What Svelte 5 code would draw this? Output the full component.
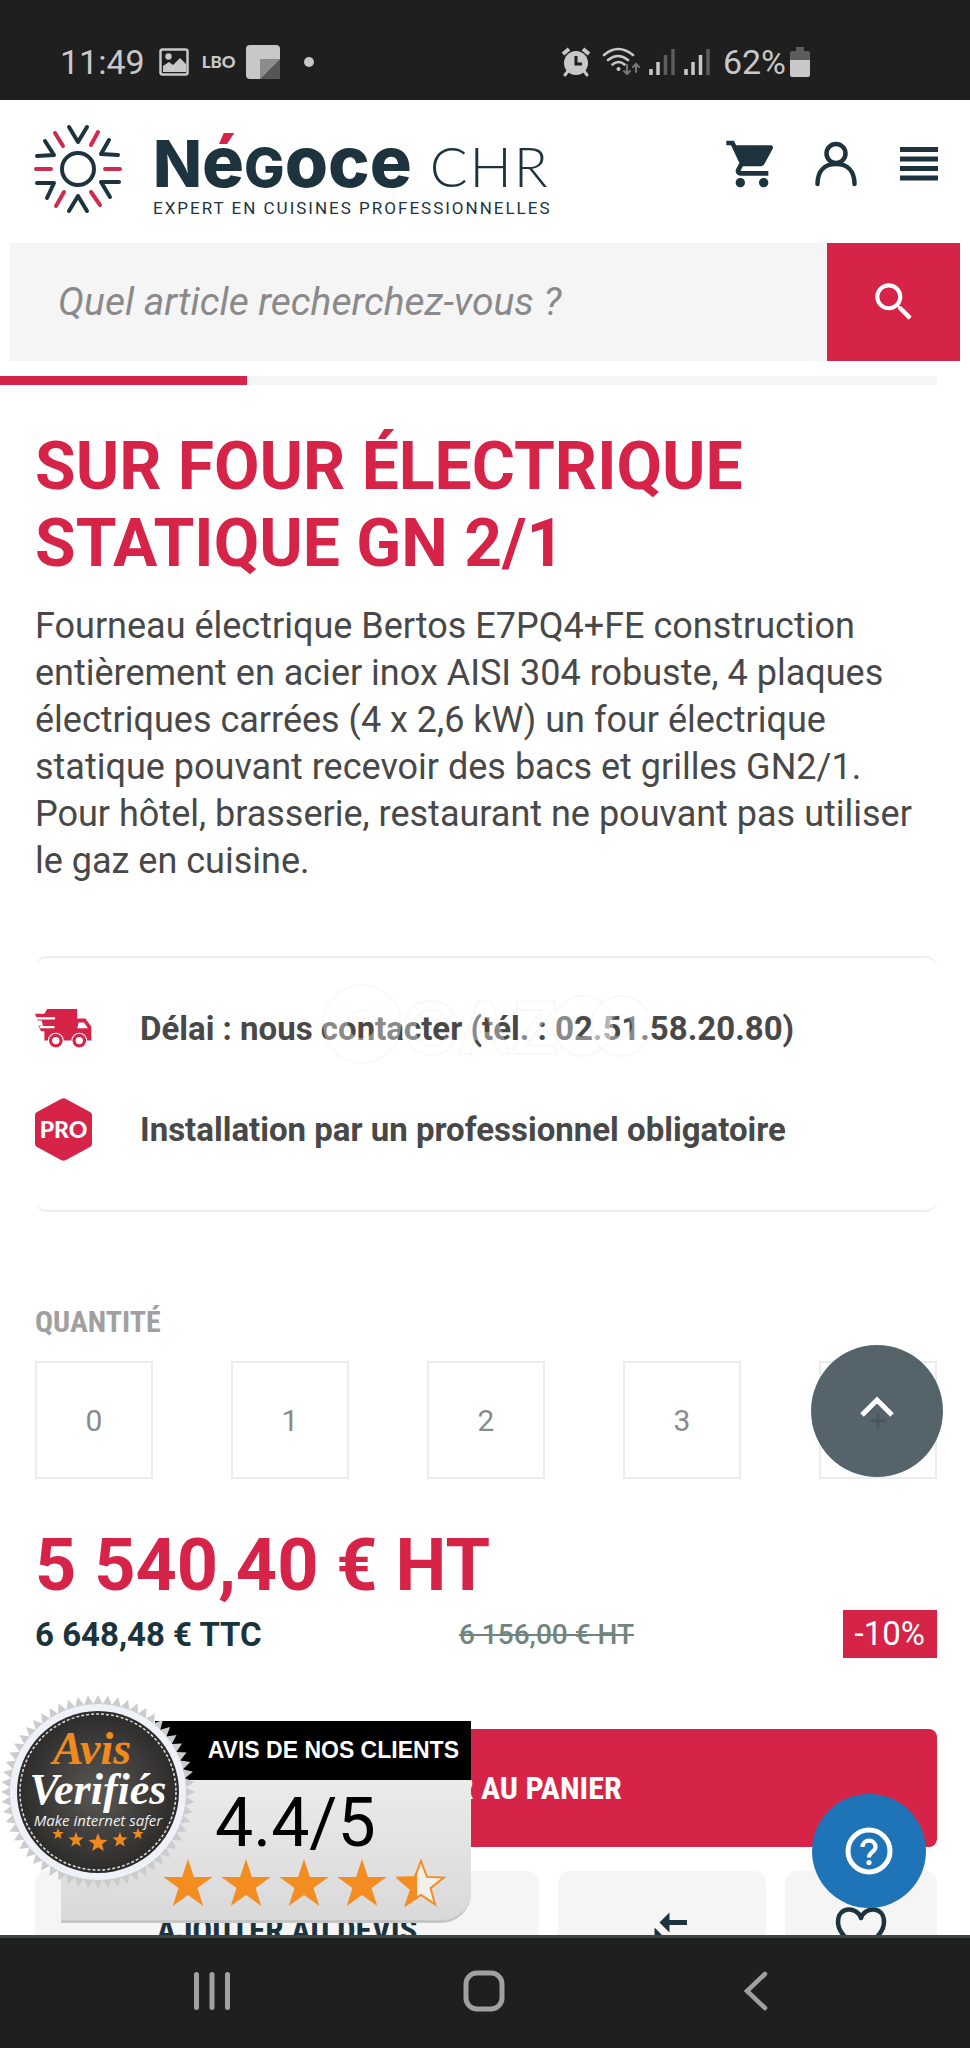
<script>
  let search = $state('');

  const quantities = ['0', '1', '2', '3', '+'];
  const gridStars = [0, 1, 2, 3];

  // Points of a regular star or toothed disc around a centre.
  function burst(cx, cy, outer, inner, tips) {
    const points = [];
    for (let i = 0; i < tips * 2; i++) {
      const r = i % 2 ? inner : outer;
      const a = (Math.PI * i) / tips - Math.PI / 2;
      points.push(`${(cx + r * Math.cos(a)).toFixed(1)},${(cy + r * Math.sin(a)).toFixed(1)}`);
    }
    return points.join(' ');
  }

  const sealStars = [
    [58, 140, 6],
    [76, 146, 8],
    [98, 149, 10],
    [120, 146, 8],
    [138, 140, 6]
  ];
</script>

<div class="screen">
  <div class="status">
    <span class="clock">11:49</span>
    <svg class="s-image" width="30" height="28" viewBox="0 0 30 28">
      <rect x="1.5" y="1.5" width="27" height="25" rx="2" fill="none" stroke="#c8c8c8" stroke-width="2.5" />
      <circle cx="9.5" cy="8.5" r="3.2" fill="#c8c8c8" />
      <path d="M4 22V18l6-4 4 3 7-7 6 6v8H4z" fill="#c8c8c8" />
    </svg>
    <span class="lbo">LBO</span>
    <svg class="s-square" width="34" height="34" viewBox="0 0 34 34">
      <rect width="34" height="34" rx="4" fill="#c8c8c8" />
      <path d="M14 14h20L14 34z" fill="#8c8c8c" />
      <path d="M34 14v20H14z" fill="#555" />
    </svg>
    <span class="dot"></span>
    <div class="status-right">
      <svg width="30" height="30" viewBox="0 0 30 30">
        <circle cx="15" cy="16" r="12" fill="#c8c8c8" />
        <path d="M2 7l6-5M28 7l-6-5" stroke="#c8c8c8" stroke-width="4" />
        <path d="M7 24l-3 4M23 24l3 4" stroke="#c8c8c8" stroke-width="3" stroke-linecap="round" />
        <path d="M15 9v8h6" fill="none" stroke="#1f1f1f" stroke-width="3" />
      </svg>
      <svg class="s-wifi" width="38" height="30" viewBox="0 0 38 30" fill="none" stroke="#c8c8c8" stroke-width="2.6" stroke-linecap="round">
        <path d="M2 8q14-12 29 0M6 13q10-8 20 0M10.500 17.500q6-5 12 0" />
        <circle cx="16.500" cy="22" r="2" fill="#c8c8c8" stroke="none" />
        <path d="M25 18v9M22 24l3 3 3-3M34 25v-8M31 20l3-3 3 3" stroke="#777" stroke-width="2" />
      </svg>
      <svg class="s-signal" width="26" height="28" viewBox="0 0 26 28">
        <path d="M2 21v6M9 14v13" stroke="#c8c8c8" stroke-width="3.500" />
        <path d="M16.500 7v20M24 1v26" stroke="#5c5c5c" stroke-width="3.500" />
      </svg>
      <svg class="s-signal" width="26" height="28" viewBox="0 0 26 28">
        <path d="M2 21v6M9 14v13M16.500 7v20" stroke="#c8c8c8" stroke-width="3.500" />
        <path d="M24 1v26" stroke="#5c5c5c" stroke-width="3.500" />
      </svg>
      <span class="percent">62%</span>
      <svg width="20" height="30" viewBox="0 0 20 30">
        <path d="M6 0h8v4h4q2 0 2 2v8H0V6q0-2 2-2h4z" fill="#5c5c5c" />
        <path d="M0 13h20v15q0 2-2 2H2q-2 0-2-2z" fill="#c8c8c8" />
      </svg>
    </div>
  </div>

  <main>
    <header>
      <a class="brand" href="#accueil" aria-label="Négoce CHR">
        <svg width="90" height="90" viewBox="33 124 90 90" fill="none" stroke-width="4" stroke-linecap="round" stroke-linejoin="round">
          <g stroke="#1d333d">
            <circle cx="78" cy="169" r="16" />
            <path d="M69 127l9 15 9-15M69 211l9-15 9 15M45 141l9 14-17 1M109 140l-8 14 17 1M37 183l17 0-7 15M119 182l-18 0 9 15" />
          </g>
          <path d="M55 133l8 13M98 132l-7 13M36 169h15M105 169h15M64 192l-8 14M91 192l9 13" stroke="#d02b4e" />
        </svg>
        <span class="words">
          <span class="name"><b><span class="cap">N</span><span class="accent">é</span><span class="small">G</span>oce</b><span class="chr">CHR</span></span>
          <span class="tagline">EXPERT EN CUISINES PROFESSIONNELLES</span>
        </span>
      </a>
      <nav class="tools">
        <button aria-label="Panier">
          <svg width="56" height="56" viewBox="0 0 24 24" fill="#1d333d">
            <path d="M7 18c-1.100 0-1.990.9-1.990 2S5.900 22 7 22s2-.9 2-2-.9-2-2-2zM1 2v2h2l3.600 7.590-1.350 2.450c-.16.28-.25.61-.25.96 0 1.100.9 2 2 2h12v-2H7.420c-.14 0-.25-.11-.25-.25l.03-.12.9-1.630h7.450c.75 0 1.410-.41 1.750-1.030l3.580-6.490A1 1 0 0 0 20 4H5.210l-.94-2H1zm16 16c-1.100 0-1.990.9-1.990 2s.89 2 1.990 2 2-.9 2-2-.9-2-2-2z" />
          </svg>
        </button>
        <button aria-label="Compte">
          <svg width="44" height="46" viewBox="0 0 44 46" fill="none" stroke="#1d333d" stroke-width="4.500" stroke-linecap="round">
            <circle cx="22" cy="12.500" r="9.500" />
            <path d="M3.500 43c0-14 8-20 18.500-20s18.500 6 18.500 20" />
          </svg>
        </button>
        <button aria-label="Menu">
          <svg width="38" height="34" viewBox="0 0 38 34" fill="#1d333d">
            <path d="M0 0h38v5H0zM0 9.500h38v5H0zM0 19h38v5H0zM0 28.500h38v5H0z" />
          </svg>
        </button>
      </nav>
    </header>

    <form class="search" onsubmit={(e) => e.preventDefault()}>
      <input type="text" aria-label="Rechercher" placeholder="Quel article recherchez-vous ?" bind:value={search} />
      <button aria-label="Lancer la recherche">
        <svg width="50" height="50" viewBox="0 0 24 24" fill="#fff">
          <path d="M15.500 14h-.79l-.28-.27A6.470 6.470 0 0 0 16 9.500 6.500 6.500 0 1 0 9.500 16c1.610 0 3.090-.59 4.230-1.570l.27.28v.79l5 4.990L20.490 19l-4.990-5zm-6 0C7.010 14 5 11.990 5 9.500S7.010 5 9.500 5 14 7.010 14 9.500 11.990 14 9.500 14z" />
        </svg>
      </button>
    </form>

    <div class="progress"><div style="width: 26.400%"></div></div>

    <article>
      <h1>SUR FOUR ÉLECTRIQUE STATIQUE GN 2/1</h1>
      <p class="description">
        Fourneau électrique Bertos E7PQ4+FE construction entièrement en acier inox AISI 304 robuste, 4 plaques
        électriques carrées (4 x 2,6 kW) un four électrique statique pouvant recevoir des bacs et grilles GN2/1. Pour
        hôtel, brasserie, restaurant ne pouvant pas utiliser le gaz en cuisine.
      </p>

      <ul class="facts">
        <li>
          <svg width="57" height="39" viewBox="0 0 170 116">
            <path d="M36 0h90v28h24l18 24v42H28V66H18l-8-16h14l-4-16H8L0 14h28z" fill="#d62449" />
            <path d="M2 28h58M14 54h44" stroke="#fff" stroke-width="7" />
            <path d="M130 40h16l12 17h-32z" fill="#fff" />
            <g fill="#d62449" stroke="#fff" stroke-width="3"><circle cx="62" cy="94" r="22" /><circle cx="132" cy="94" r="22" /></g>
            <circle cx="62" cy="94" r="11" fill="#fff" /><circle cx="132" cy="94" r="11" fill="#fff" />
          </svg>
          <span>Délai : nous contacter (tél. : 02.51.58.20.80)</span>
        </li>
        <li>
          <svg width="57" height="63" viewBox="0 0 57 63">
            <path d="M26 1q2.500-1.400 5 0l24 13q2 1 2 3v29q0 2-2 3L31 62q-2.500 1.400-5 0L2 49q-2-1-2-3V17q0-2 2-3z" fill="#d62449" />
            <text x="28.500" y="40" text-anchor="middle" font-family="Lato, sans-serif" font-weight="900" font-size="23" fill="#fff">PRO</text>
          </svg>
          <span>Installation par un professionnel obligatoire</span>
        </li>
      </ul>
      <svg class="watermark" width="336" height="84" viewBox="0 0 336 84" fill="#fff" fill-opacity=".36" stroke="#999" stroke-opacity=".06" stroke-width="2" aria-hidden="true">
        <path fill-rule="evenodd" d="M42 2a39 39 0 1 0 .1 0zM42 27a14 14 0 1 1-.1 0z" />
        <text x="82" y="71" font-family="Liberation Sans, sans-serif" font-weight="700" font-size="76">CAZ</text>
        <path fill-rule="evenodd" d="M263 13a30 30 0 1 0 .1 0zM263 32a11 11 0 1 1-.1 0z" />
        <path fill-rule="evenodd" d="M301 13a30 30 0 1 0 .1 0zM301 32a11 11 0 1 1-.1 0z" />
      </svg>

      <h2>QUANTITÉ</h2>
      <div class="quantities">
        {#each quantities as q}
          <button>{q}</button>
        {/each}
      </div>

      <div class="price">5 540,40 € HT</div>
      <div class="price-row">
        <span class="ttc">6 648,48 € TTC</span>
        <s>6 156,00 € HT</s>
        <span class="discount">-10%</span>
      </div>

      <button class="add">AJOUTER AU PANIER</button>
      <div class="actions">
        <button>AJOUTER AU DEVIS</button>
        <button aria-label="Comparer">
          <svg width="60" height="60" viewBox="0 0 24 24" fill="#1d333d">
            <path d="M9.010 14H2v2h7.010v3L13 15l-3.990-4v3zm5.980-1v-3H22V8h-7.010V5L11 9l3.990 4z" />
          </svg>
        </button>
        <button aria-label="Ajouter aux favoris">
          <svg width="52" height="48" viewBox="0 0 52 48" fill="none" stroke="#1d333d" stroke-width="4.500" stroke-linejoin="round">
            <path d="M26 12C22 0 3 0 3 16c0 12 13 20 23 29 10-9 23-17 23-29C49 0 30 0 26 12z" />
          </svg>
        </button>
      </div>
    </article>

    <button class="to-top" aria-label="Haut de page">
      <svg width="36" height="24" viewBox="0 0 36 24" fill="none" stroke="#fff" stroke-width="5"><path d="M3 21L18 6l15 15" /></svg>
    </button>

    <button class="help" aria-label="Aide">
      <svg width="48" height="48" viewBox="0 0 48 48" fill="none" stroke="#fff">
        <circle cx="24" cy="24" r="21" stroke-width="5" />
        <path d="M17.500 20c0-8.500 13-8.500 13 0 0 5-6.500 5-6.500 10.500" stroke-width="4.200" />
        <circle cx="24" cy="35.500" r="2.600" fill="#fff" stroke="none" />
      </svg>
    </button>

    <aside class="reviews">
      <div class="reviews-title">AVIS DE NOS CLIENTS</div>
      <div class="reviews-body">
        <span class="score">4.4/5</span>
        <svg width="284" height="50" viewBox="0 0 284 50" fill="#f38d22">
          {#each gridStars as n}
            <polygon points={burst(25 + n * 58, 27, 26, 10, 5)} />
          {/each}
          <polygon points={burst(258, 27, 24, 10, 5)} fill="#f3efe9" stroke="#f38d22" stroke-width="2" />
          <path d="M254 12v28l-13 9 6-17-14-12h17z" />
        </svg>
      </div>
      <svg class="seal" width="196" height="196" viewBox="0 0 196 196">
        <defs>
          <radialGradient id="dark"><stop offset="0" stop-color="#5a5854" /><stop offset="1" stop-color="#2c2b2a" /></radialGradient>
        </defs>
        <polygon points={burst(98, 98, 97, 88, 60)} fill="#cdcccc" />
        <circle cx="98" cy="98" r="88" fill="#eef1f8" />
        <circle cx="98" cy="98" r="81" fill="url(#dark)" />
        <circle cx="98" cy="98" r="78" fill="none" stroke="#ddd" stroke-width="1.500" stroke-dasharray="3 2" />
        <g text-anchor="middle" font-style="italic" font-weight="700">
          <text x="92" y="70" font-family="Liberation Serif, serif" font-size="46" fill="#f08a1d">Avis</text>
          <text x="98" y="110" font-family="Liberation Serif, serif" font-size="44" fill="#fff">Verifiés</text>
          <text x="98" y="132" font-family="Open Sans, sans-serif" font-size="15" font-weight="400" fill="#eee">Make internet safer</text>
        </g>
        {#each sealStars as [x, y, r]}
          <polygon points={burst(x, y, r, r * 0.42, 5)} fill="#f08a1d" />
        {/each}
      </svg>
    </aside>
  </main>

  <nav class="system">
    <button aria-label="Applications récentes">
      <svg width="40" height="42" viewBox="0 0 40 42" stroke="#a0a0a0" stroke-width="5" stroke-linecap="round"><path d="M4.500 4.500v33M20 4.500v33M35.500 4.500v33" /></svg>
    </button>
    <button aria-label="Accueil">
      <svg width="42" height="42" viewBox="0 0 42 42" fill="none" stroke="#a0a0a0" stroke-width="5"><rect x="3" y="3" width="36" height="36" rx="11" /></svg>
    </button>
    <button aria-label="Retour">
      <svg width="40" height="42" viewBox="0 0 40 42" fill="none" stroke="#a0a0a0" stroke-width="4.500" stroke-linecap="round"><path d="M29 4L11 21l18 17" /></svg>
    </button>
  </nav>
</div>

<style>
  :global(body) { margin: 0; background: #fff; }
  * { box-sizing: border-box; }
  button { border: 0; padding: 0; margin: 0; background: none; font: inherit; color: inherit; display: flex; align-items: center; justify-content: center; }
  svg { display: block; flex: none; }

  .screen { height: 100vh; display: flex; flex-direction: column; font-family: Roboto, sans-serif; color: #484848; }

  .status { height: 100px; flex: none; display: flex; align-items: center; padding: 24px 160px 0 60px; background: #1f1f1f; color: #c8c8c8; }
  .clock, .percent { font-size: 34px; line-height: 40px; }
  .s-image { margin-left: 14px; }
  .lbo { margin-left: 13px; font: 900 17px/24px Lato, sans-serif; }
  .s-square { margin-left: 10px; }
  .dot { width: 10px; height: 10px; border-radius: 50%; background: #c8c8c8; margin-left: 24px; }
  .status-right { margin-left: auto; display: flex; align-items: center; }
  .s-wifi { margin-left: 11px; }
  .s-signal { margin-left: 9px; }
  .percent { margin: 0 4px 0 13px; }

  main { flex: 1; min-height: 0; overflow: hidden; position: relative; }

  header { height: 143px; display: flex; align-items: center; justify-content: space-between; padding: 0 32px 6px 33px; }
  .brand { display: flex; align-items: center; gap: 30px; color: #1d333d; text-decoration: none; }
  .words { display: flex; flex-direction: column; padding-top: 8px; }
  .name { display: flex; align-items: baseline; gap: 18px; height: 70px; line-height: 68px; }
  .name b { font-family: Inter, sans-serif; font-size: 70px; font-weight: 800; }
  .cap { font-size: 64px; }
  .small { font-size: 54px; }
  .accent { background: linear-gradient(#d62449 0 27px, #1d333d 27px); background-clip: text; -webkit-background-clip: text; color: transparent; }
  .chr { font-family: Lato, sans-serif; font-weight: 300; font-size: 56px; letter-spacing: 2px; }
  .tagline { font-size: 17px; line-height: 20px; letter-spacing: 2px; }
  .tools { display: flex; align-items: center; gap: 34px; padding-bottom: 10px; }
  .tools button:last-child { margin-left: 8px; }

  .search { display: flex; height: 118px; margin: 0 10px; }
  .search input { flex: 1; min-width: 0; border: 0; border-radius: 0; outline: 0; background: #f5f5f5; padding: 0 48px; font: italic 39px/44px Roboto, sans-serif; color: #555; }
  .search input::placeholder { color: #8a8a8a; opacity: 1; }
  .search button { width: 133px; background: #d62449; }

  .progress { height: 9px; margin: 15px 33px 0 0; background: #f5f5f5; }
  .progress div { height: 100%; background: #d62449; }

  article { position: relative; padding: 43px 33px 0 35px; }
  h1 { margin: 0 0 21px; font-size: 66px; line-height: 77px; font-weight: 700; color: #d62449; }
  .description { margin: 0 0 71px; font-size: 36px; line-height: 47px; }

  .facts { list-style: none; margin: 0; padding: 39px 0 49px; border: 2px solid #efefef; border-width: 2px 0; border-radius: 12px; display: flex; flex-direction: column; gap: 38px; }
  .facts li { height: 63px; display: flex; align-items: center; gap: 48px; font-size: 33px; font-weight: 700; white-space: nowrap; }
  .watermark { position: absolute; left: 320px; top: 598px; }

  h2 { margin: 93px 0 22px; font-family: "Roboto Condensed", Roboto, sans-serif; font-size: 30px; line-height: 34px; font-weight: 700; color: #a0a0a0; }
  .quantities { display: flex; justify-content: space-between; margin-bottom: 47px; }
  .quantities button { width: 118px; height: 118px; border: 2px solid #ececec; font-size: 30px; color: #8a8a8a; }

  .price { font-size: 72px; line-height: 80px; font-weight: 700; color: #d62449; }
  .price-row { display: grid; grid-template-columns: 424px 1fr auto; align-items: center; margin: 4px 0 71px; }
  .ttc { font-size: 33px; font-weight: 700; color: #1b333b; }
  .price-row s { font-size: 28px; color: #71857f; font-weight: 500; }
  .discount { background: #d62449; color: #fff; padding: 0 12px; font-size: 33px; line-height: 48px; }

  .add { width: 100%; height: 118px; border-radius: 8px; background: #d62449; color: #fff; font-family: "Roboto Condensed", Roboto, sans-serif; font-size: 32px; font-weight: 700; }
  .actions { display: grid; grid-template-columns: 504fr 208fr 152fr; gap: 19px; margin-top: 24px; }
  .actions button { height: 118px; border-radius: 12px; background: #f5f5f5; color: #1d333d; font-family: "Roboto Condensed", Roboto, sans-serif; font-size: 33px; font-weight: 700; }

  .to-top { position: absolute; right: 27px; bottom: 458px; width: 132px; height: 132px; padding-bottom: 10px; border-radius: 50%; background: rgb(61 78 87 / 88%); }
  .help { position: absolute; right: 44px; bottom: 27px; width: 114px; height: 114px; border-radius: 50%; background: #1f74b8; }

  .reviews { position: absolute; left: 61px; bottom: 12px; width: 410px; }
  .reviews-title { margin-left: 94px; height: 59px; background: #000; color: #fff; padding-right: 12px; text-align: right; font: 700 23px/59px "Liberation Sans", sans-serif; }
  .reviews-body { height: 143px; border-radius: 0 0 30px 0; background: linear-gradient(#ebebeb, #d9d9d9); border-bottom: 3px solid #c6c6c6; display: flex; flex-direction: column; align-items: flex-end; padding: 8px 24px 0 0; }
  .score { width: 284px; padding-left: 52px; font-size: 68px; line-height: 70px; color: #000; }
  .seal { position: absolute; left: -61px; top: -27px; }

  .system { height: 113px; flex: none; display: flex; align-items: center; justify-content: center; gap: 231px; padding: 0 3px 5px 0; background: #1f1f1f; border-top: 3px solid #3d4242; }
</style>
